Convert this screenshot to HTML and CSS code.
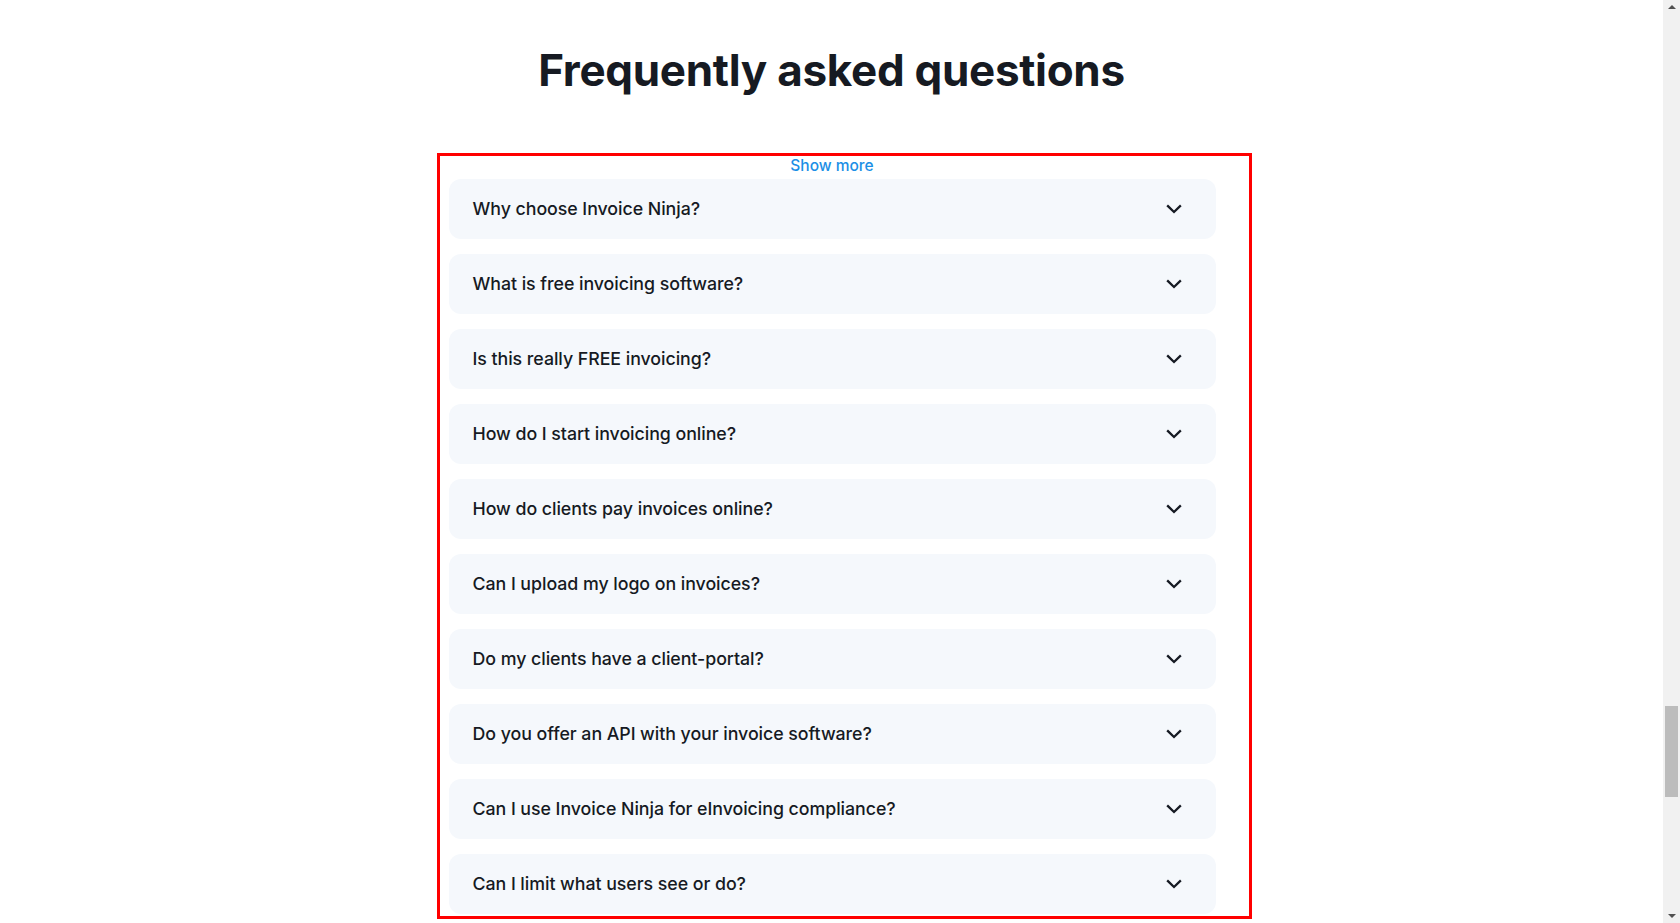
FILE: index.html
```html
<!DOCTYPE html>
<html lang="en">
<head>
<meta charset="utf-8">
<title>FAQ</title>
<link rel="stylesheet" href="styles.css">
</head>
<body>
<div class="window">
  <main class="page">
    <h1 class="title">Frequently asked questions</h1>
    <section class="frame">
      <div class="faq">
        <a class="show-more" href="#">Show more</a>
        <div class="item"><span class="q">Why choose Invoice Ninja?</span><svg class="chev" viewBox="0 0 16 16"><path d="M2 5.2 8 11 14 5.2"/></svg></div>
        <div class="item"><span class="q">What is free invoicing software?</span><svg class="chev" viewBox="0 0 16 16"><path d="M2 5.2 8 11 14 5.2"/></svg></div>
        <div class="item"><span class="q">Is this really FREE invoicing?</span><svg class="chev" viewBox="0 0 16 16"><path d="M2 5.2 8 11 14 5.2"/></svg></div>
        <div class="item"><span class="q">How do I start invoicing online?</span><svg class="chev" viewBox="0 0 16 16"><path d="M2 5.2 8 11 14 5.2"/></svg></div>
        <div class="item"><span class="q">How do clients pay invoices online?</span><svg class="chev" viewBox="0 0 16 16"><path d="M2 5.2 8 11 14 5.2"/></svg></div>
        <div class="item"><span class="q">Can I upload my logo on invoices?</span><svg class="chev" viewBox="0 0 16 16"><path d="M2 5.2 8 11 14 5.2"/></svg></div>
        <div class="item"><span class="q">Do my clients have a client-portal?</span><svg class="chev" viewBox="0 0 16 16"><path d="M2 5.2 8 11 14 5.2"/></svg></div>
        <div class="item"><span class="q">Do you offer an API with your invoice software?</span><svg class="chev" viewBox="0 0 16 16"><path d="M2 5.2 8 11 14 5.2"/></svg></div>
        <div class="item"><span class="q">Can I use Invoice Ninja for eInvoicing compliance?</span><svg class="chev" viewBox="0 0 16 16"><path d="M2 5.2 8 11 14 5.2"/></svg></div>
        <div class="item"><span class="q">Can I limit what users see or do?</span><svg class="chev" viewBox="0 0 16 16"><path d="M2 5.2 8 11 14 5.2"/></svg></div>
      </div>
    </section>
  </main>
  <aside class="scrollbar">
    <span class="arrow up"></span>
    <div class="track"><div class="thumb"></div></div>
    <span class="arrow down"></span>
  </aside>
</div>
</body>
</html>
```

FILE: styles.css
```css
* { box-sizing: border-box; }
html, body { margin: 0; padding: 0; height: 100%; overflow: hidden; background: #fff; }
body { font-family: "Inter", "Noto Sans", sans-serif; color: #161a23; }

.window { display: flex; height: 923px; }
.page { flex: 1; display: flex; flex-direction: column; align-items: center; }

.title {
  margin: 43px 0 0 0;
  font-size: 44px;
  line-height: 54px;
  font-weight: 700;
  letter-spacing: -0.3px;
  color: #161a22;
  text-align: center;
}

.frame {
  margin-top: 56px;
  margin-left: 25px;
  width: 815px;
  border: 3px solid #ff0000;
  padding: 0 33px 2px 9px;
}

.faq { display: flex; flex-direction: column; align-items: center; }

.show-more {
  font-size: 15.5px;
  line-height: 18px;
  font-weight: 500;
  color: #1b8fe6;
  text-decoration: none;
  margin-top: 1px;
  margin-bottom: 4px;
}

.item {
  width: 100%;
  height: 60px;
  margin-bottom: 15px;
  background: #f5f8fc;
  border-radius: 12px;
  display: flex;
  align-items: center;
  justify-content: space-between;
  padding: 0 34px 0 24px;
}
.item:last-child { margin-bottom: 0; }

.q { font-size: 17.8px; font-weight: 500; color: #161a23; letter-spacing: -0.05px; padding-bottom: 2px; }

.chev { width: 16px; height: 16px; fill: none; stroke: #161a23; stroke-width: 2.3; stroke-linecap: square; stroke-linejoin: miter; }

.scrollbar {
  width: 17px;
  background: #f1f1f1;
  display: flex;
  flex-direction: column;
  align-items: center;
}
.arrow { width: 0; height: 0; border-left: 4px solid transparent; border-right: 4px solid transparent; margin: 5px 0; }
.arrow.up { border-bottom: 4px solid #505050; }
.arrow.down { border-top: 4px solid #505050; }
.track { flex: 1; width: 100%; padding-top: 692px; display: flex; justify-content: center; }
.thumb { width: 13px; height: 91px; background: #bcbcbc; }
```
